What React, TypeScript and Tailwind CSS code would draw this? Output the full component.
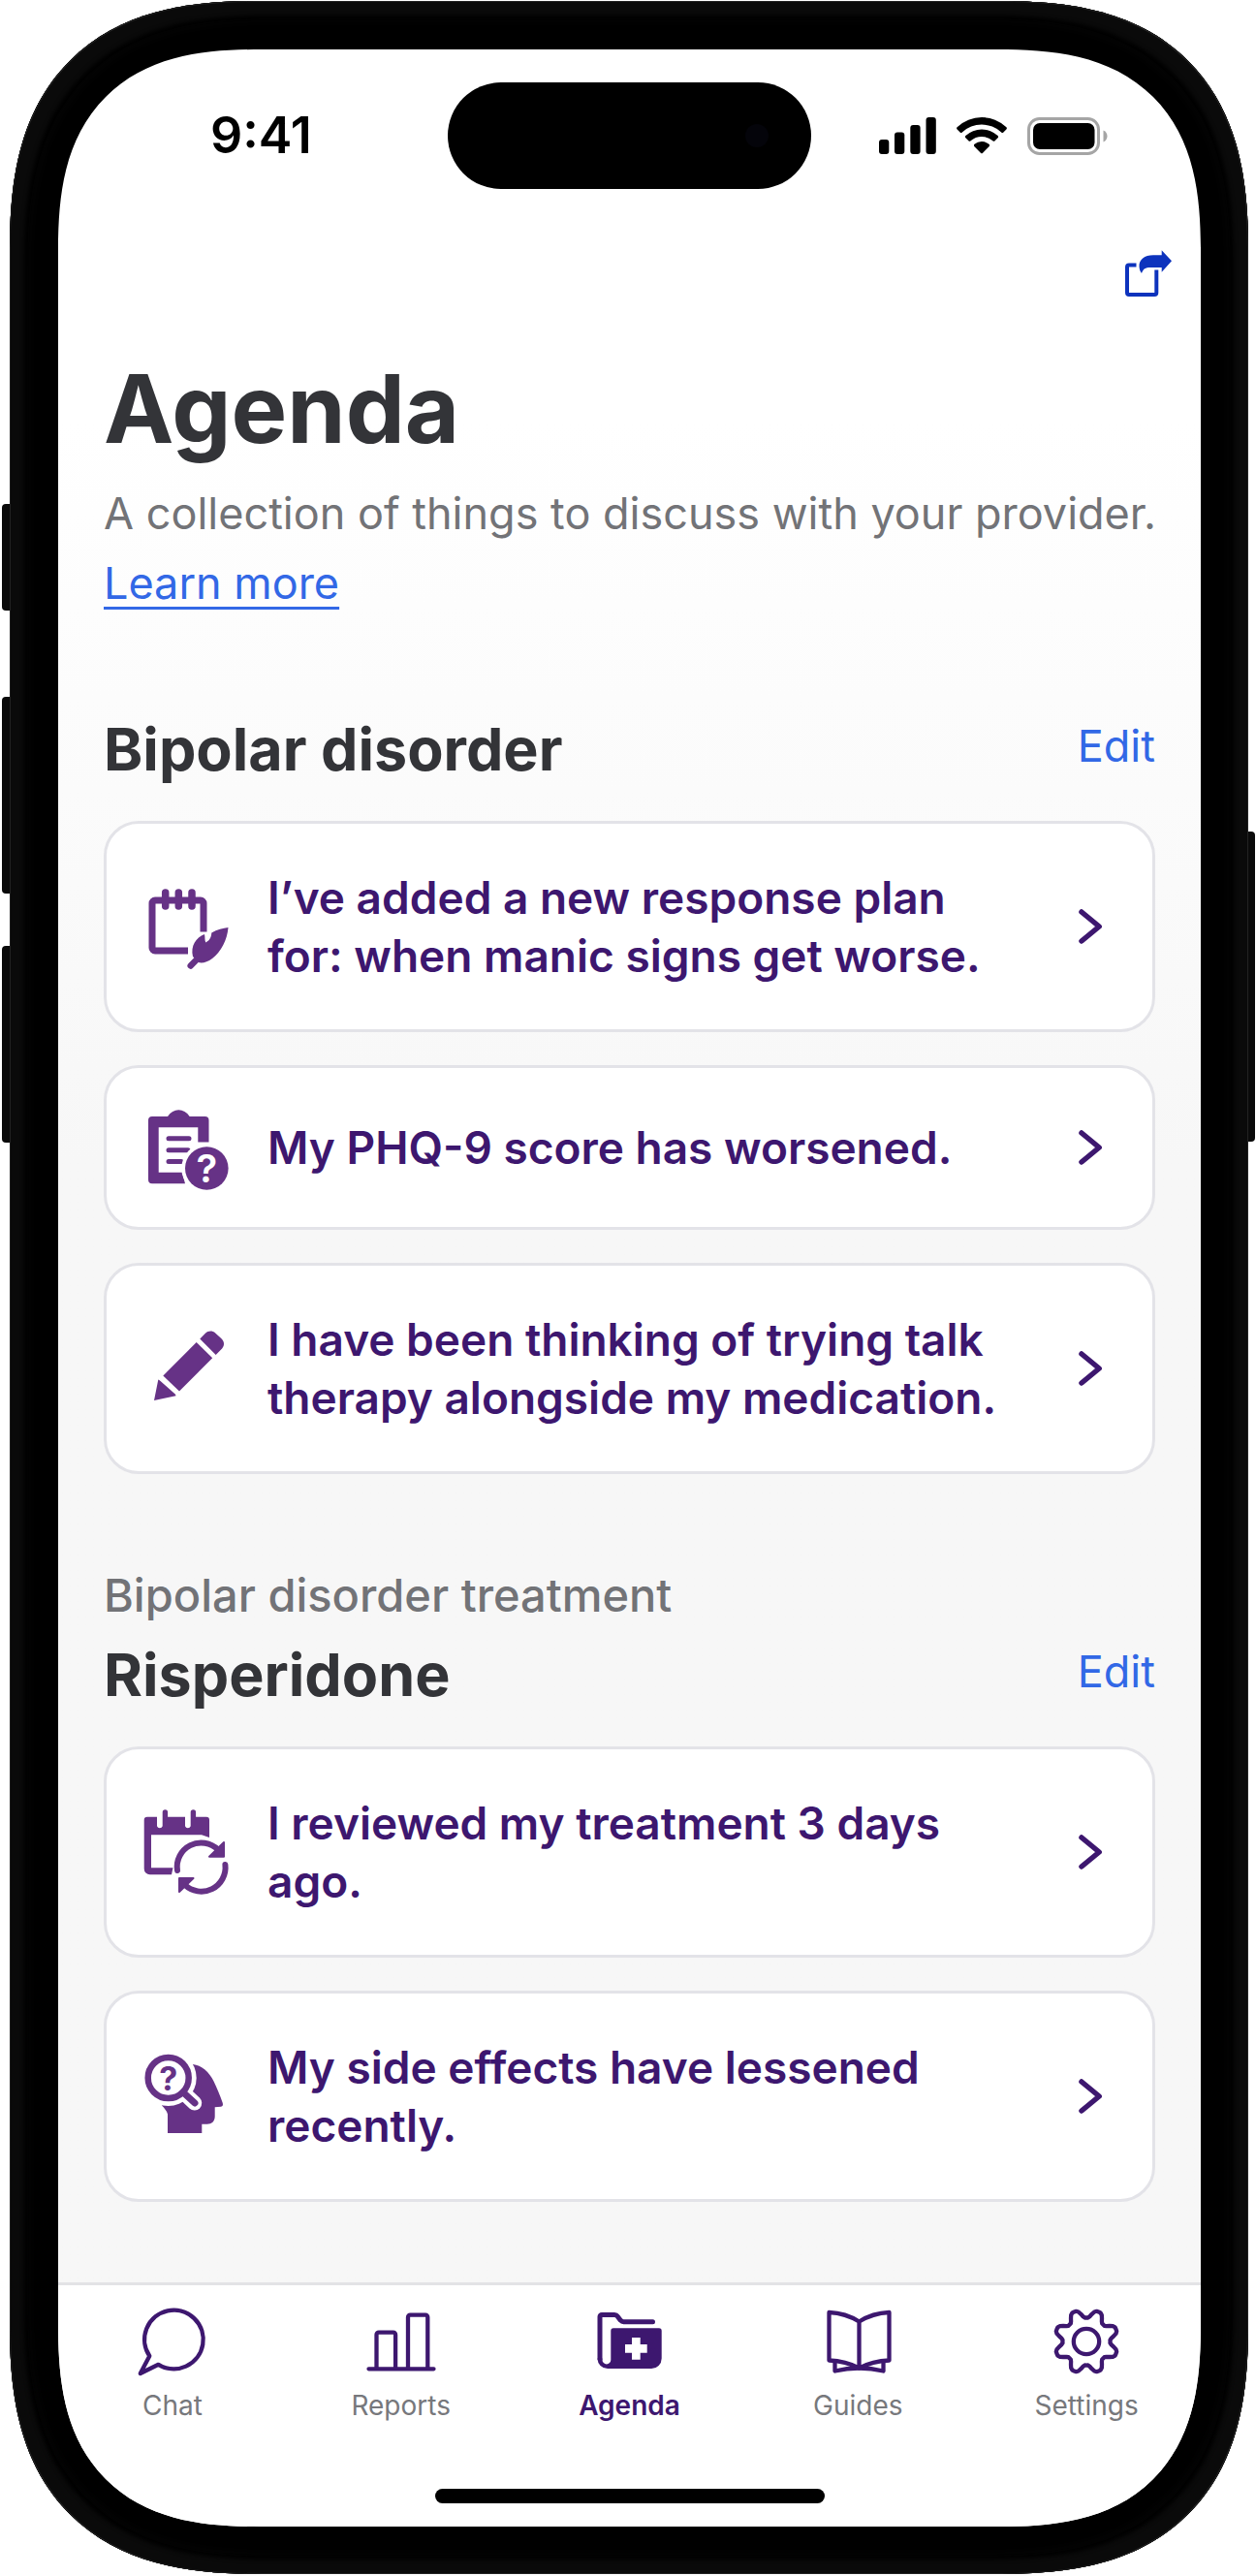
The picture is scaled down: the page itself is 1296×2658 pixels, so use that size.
import React, { useState } from 'react';

interface AgendaItem {
  text: string;
  icon: React.ReactNode;
}

interface AgendaSection {
  overline?: string;
  title: string;
  items: AgendaItem[];
}

// --- Card icons ---
const NoteIcon = () => (
  <svg viewBox="0 0 96 96" className="size-24 shrink-0" fill="none" aria-hidden="true">
    <g stroke="#663286">
      <path d="M50 73H16a3 3 0 0 1-3-3V24a3 3 0 0 1 3-3h47a3 3 0 0 1 3 3v29.500" strokeWidth="7" />
      <path d="M26.700 13v14M40.300 13v14M54 13v14" strokeWidth="7.500" strokeLinecap="round" />
      <path d="M52.700 88.500L62 79" strokeWidth="6.500" strokeLinecap="round" />
    </g>
    <path
      d="M55 79C52.500 68 58 59.500 67 56c.800 3 0 6 1.300 8.500 3-1.500 5.700-4.500 6-10C80 51 86 49.800 91.500 49c-1 13-7.500 25-16.500 32-4.500 3.600-9 4.800-13.500 4.300z"
      fill="#663286"
    />
  </svg>
);

const ClipboardIcon = () => (
  <svg viewBox="0 0 96 96" className="size-24 shrink-0" aria-hidden="true">
    <path
      fill="#663286"
      fillRule="evenodd"
      d="M13 16h16c3-4.500 7-6.800 11.300-6.800S48.700 11.500 51.700 16H67.500a4 4 0 0 1 4 4v22.500H60.300V27.200H19.700v46.600H44l3 11.400H13a4 4 0 0 1-4-4V20a4 4 0 0 1 4-4z"
    />
    <path d="M30 38.800h21M30 50.700h20M30 62.500h13" stroke="#663286" strokeWidth="5" strokeLinecap="round" />
    <circle cx="69.300" cy="69.500" r="26" fill="#fff" />
    <circle cx="69.300" cy="69.500" r="22.300" fill="#663286" />
    <text x="69.300" y="84" textAnchor="middle" fontSize="40" className="font-semibold" fill="#fff">?</text>
  </svg>
);

const PencilIcon = () => (
  <svg viewBox="0 0 96 96" className="size-24 shrink-0" fill="#663286" aria-hidden="true">
    <path d="M15 81l4.300-21.500c1 .500 1.700 1 2.500 1.800L36.200 74c.800.700 1.200 1.500 1.300 2.300z" />
    <path d="M24.300 55.400L58.700 21 75.200 37.200 41 71.400z" />
    <path d="M62.300 17.500l5.600-5.800c2.800-2.800 7.300-3 10.300-.200l6.300 5.800c3.200 3 3.400 7.300.600 10.300L78.700 34z" />
  </svg>
);

const ReviewIcon = () => (
  <svg viewBox="0 0 96 96" className="size-24 shrink-0" fill="none" aria-hidden="true">
    <path
      fill="#663286"
      fillRule="evenodd"
      d="M8 11.700h10v9.600a3 3 0 0 0 5.700 0V7a2.700 2.700 0 0 1 5.400 0v4.700H47v9.600a3 3 0 0 0 5.700 0V7a2.700 2.700 0 0 1 5.400 0v4.700H69a3 3 0 0 1 3 3V33l-8-2.700H12v34h22.500L33 71.300H10.700a6 6 0 0 1-6-6V15a3.300 3.300 0 0 1 3.300-3.300z"
    />
    <g stroke="#663286" strokeWidth="6" strokeLinecap="round">
      <path d="M39 67A24.800 24.800 0 0 1 81 45.700" />
      <path d="M88.400 61A24.800 24.800 0 0 1 46.500 81.700" />
    </g>
    <g fill="#663286" stroke="#663286" strokeWidth="2" strokeLinejoin="round">
      <path d="M87 38v14.700H72z" />
      <path d="M41 75h14.500L41 89z" />
    </g>
  </svg>
);

const MindIcon = () => (
  <svg viewBox="0 0 96 96" className="size-24 shrink-0" fill="none" aria-hidden="true">
    <path
      fill="#663286"
      d="M55 15c9 1 17 8 21.500 17.500C80 40 83 47 85.700 54.700c.700 2.300.200 3.600-1.700 4l-6.300.600v9.400c0 5-3.200 8-8 8h-5.400V86H29V66.500c-1-3.300-3-6-6-9L40 30z"
    />
    <path d="M44 43l12.700 12" stroke="#fff" strokeWidth="15" strokeLinecap="round" />
    <circle cx="29.700" cy="29" r="29" fill="#fff" />
    <path d="M45 44l12 11" stroke="#663286" strokeWidth="7" strokeLinecap="round" />
    <circle cx="29.700" cy="29" r="21" stroke="#663286" strokeWidth="6.500" />
    <text x="29.700" y="41.500" textAnchor="middle" fontSize="34" className="font-bold" fill="#663286">?</text>
  </svg>
);

const ShareIcon = () => (
  <svg viewBox="0 0 48 48" className="size-12" fill="none" aria-hidden="true">
    <path d="M11.500 15.500H4a2 2 0 0 0-2 2V44a2 2 0 0 0 2 2h26.300a2 2 0 0 0 2-2V20.500" stroke="#0d33bd" strokeWidth="4" />
    <path d="M48 11.300L37.700.300v5H29c-9 0-15 4.700-14.500 11.700.200 3 1 5 2.500 7 1.500-4.500 4-6 9-6h11.700v4.700z" fill="#0d33bd" />
  </svg>
);

const ChevronIcon = () => (
  <svg viewBox="0 0 48 48" className="size-12 shrink-0" fill="none" aria-hidden="true">
    <path d="M15 9l18.200 15L15 39" stroke="#3d176f" strokeWidth="5.500" strokeLinecap="round" strokeLinejoin="round" />
  </svg>
);

// --- Status bar icons ---
const SignalIcon = () => (
  <svg viewBox="0 0 59 38" className="h-[38px] w-[59px]" aria-hidden="true">
    <rect x="0" y="23" width="10.300" height="15" rx="3" />
    <rect x="16" y="15.500" width="10.300" height="22.500" rx="3" />
    <rect x="32.300" y="8" width="10.300" height="30" rx="3" />
    <rect x="48.500" y="0" width="10.300" height="38" rx="3" />
  </svg>
);

const WifiIcon = () => (
  <svg viewBox="0 0 52 38" className="h-[38px] w-[52px]" aria-hidden="true">
    <path d="M.600 10.200a36.800 36.800 0 0 1 50.800 0c.700.700.700 1.600 0 2.300l-3 3c-.700.700-1.500.700-2.200 0a29.500 29.500 0 0 0-40.400 0c-.700.700-1.500.700-2.200 0l-3-3c-.700-.700-.700-1.600 0-2.300z" />
    <path d="M9.400 19a24.300 24.300 0 0 1 33.200 0c.700.700.700 1.600 0 2.300l-3 3c-.700.700-1.500.700-2.200 0a17 17 0 0 0-22.800 0c-.700.700-1.500.700-2.200 0l-3-3c-.700-.700-.700-1.600 0-2.300z" />
    <path d="M18.500 27.800a11.700 11.700 0 0 1 15 0c.800.700.800 1.700 0 2.400l-6.400 6.500c-.700.700-1.500.700-2.200 0l-6.400-6.500c-.800-.700-.800-1.700 0-2.400z" />
  </svg>
);

const BatteryIcon = () => (
  <svg viewBox="0 0 83 39" className="h-[39px] w-[83px]" aria-hidden="true">
    <rect x="1.500" y="1.500" width="72" height="36" rx="11" fill="none" stroke="#a5a5a5" strokeWidth="3" />
    <rect x="6" y="6" width="63.500" height="27" rx="7" />
    <path d="M78.500 13.500c2.700 1.200 4 3.400 4 6s-1.300 4.800-4 6z" fill="#a5a5a5" />
  </svg>
);

// --- Tab bar icons ---
const ChatIcon = () => (
  <path d="M12.300 51A30.300 30.300 0 1 1 21.500 59.800L2.800 69z" />
);

const ReportsIcon = () => (
  <path d="M2.500 64.300h67M10.500 64V29a2.300 2.300 0 0 1 2.300-2.300h15a2.300 2.300 0 0 1 2.300 2.300v35M43 64V11a2.300 2.300 0 0 1 2.300-2.300H61a2.300 2.300 0 0 1 2.300 2.300v53" />
);

const FolderIcon = () => (
  <>
    <path d="M60.500 15.700H30.500c-1.500 0-2.300-.500-3.200-1.500l-3-4c-.800-1.200-1.800-1.800-3.300-1.800H8a2 2 0 0 0-2 2V54" strokeWidth="5" />
    <path
      d="M20 22.300h47a2.700 2.700 0 0 1 2.700 2.700v28.500A10.500 10.500 0 0 1 59.200 64H14A10.500 10.500 0 0 1 3.500 53.500h5V55a4.400 4.400 0 0 0 8.800 0V25a2.700 2.700 0 0 1 2.700-2.700z"
      fill="#3d176f"
      stroke="none"
    />
    <path d="M39 32h8.700v7h7v8.700h-7v7H39v-7h-7V39h7z" fill="#fff" stroke="none" />
  </>
);

const GuidesIcon = () => (
  <>
    <path d="M37.500 15.500C28 9.500 18 6.500 6.500 6v49.500c11.500.500 21.500 3 31 8 9.500-5 19.500-7.500 31-8V6C57 6.500 47 9.500 37.500 15.500zM37.500 15.500v48" />
    <path d="M12.500 57v9.500C21.500 64.300 29.500 63.500 37.500 63.500s16 .800 25 3V57" />
  </>
);

// Eight lobes, with a valley on every 45 degrees
const gearPath = Array.from({ length: 96 }, (_, i) => {
  const a = (i / 96) * Math.PI * 2;
  const wave = Math.max(-1, Math.min(1, 1.3 * Math.cos(8 * a)));
  const r = 28.8 - 4.2 * wave;
  return `${i === 0 ? 'M' : 'L'}${(36 + r * Math.cos(a)).toFixed(1)} ${(36 + r * Math.sin(a)).toFixed(1)}`;
}).join('') + 'z';

const SettingsIcon = () => (
  <>
    <path d={gearPath} />
    <circle cx="36" cy="36" r="13.200" />
  </>
);

const sections: AgendaSection[] = [
  {
    title: 'Bipolar disorder',
    items: [
      { text: 'I’ve added a new response plan for: when manic signs get worse.', icon: <NoteIcon /> },
      { text: 'My PHQ-9 score has worsened.', icon: <ClipboardIcon /> },
      { text: 'I have been thinking of trying talk therapy alongside my medication.', icon: <PencilIcon /> },
    ],
  },
  {
    overline: 'Bipolar disorder treatment',
    title: 'Risperidone',
    items: [
      { text: 'I reviewed my treatment 3 days ago.', icon: <ReviewIcon /> },
      { text: 'My side effects have lessened recently.', icon: <MindIcon /> },
    ],
  },
];

const tabs = [
  { label: 'Chat', icon: <ChatIcon /> },
  { label: 'Reports', icon: <ReportsIcon /> },
  { label: 'Agenda', icon: <FolderIcon /> },
  { label: 'Guides', icon: <GuidesIcon /> },
  { label: 'Settings', icon: <SettingsIcon /> },
];

const StatusBar = () => (
  <div className="grid grid-cols-[1fr_375px_1fr] items-center pt-[34px] pb-[33px]">
    <span className="pl-[157px] text-[52px] leading-[60px] font-semibold text-black">9:41</span>
    <div className="flex h-[110px] items-center justify-end rounded-full bg-black pr-11">
      <div className="size-6 rounded-full bg-[#04040a]" />
    </div>
    <div className="flex items-center justify-end gap-[21px] pr-24">
      <SignalIcon />
      <WifiIcon />
      <BatteryIcon />
    </div>
  </div>
);

const Card = ({ item }: { item: AgendaItem }) => (
  <li>
    <button
      type="button"
      className="flex min-h-[170px] w-full cursor-pointer items-center rounded-[36px] border-3 border-[#e3e3e8] bg-white py-[46px] pr-10 pl-[34px] text-left"
    >
      <span className="-my-5 shrink-0">{item.icon}</span>
      <span className="flex-1 pr-14 pl-9 text-[46px] leading-[60px] font-semibold text-[#3d176f]">{item.text}</span>
      <ChevronIcon />
    </button>
  </li>
);

const Section = ({ section }: { section: AgendaSection }) => (
  <section className="mt-[95px]">
    {section.overline && (
      <p className="mb-3 text-[47px] leading-[60px] font-medium text-[#727377]">{section.overline}</p>
    )}
    <div className="flex items-start justify-between">
      <h2 className="text-[61px] leading-[80px] font-bold text-[#333438]">{section.title}</h2>
      <button type="button" className="cursor-pointer text-[45px] leading-[74px] text-[#3268e6]">Edit</button>
    </div>
    <ul className="mt-[34px] flex flex-col gap-[34px]">
      {section.items.map((item) => <Card key={item.text} item={item} />)}
    </ul>
  </section>
);

const App: React.FC = () => {
  const [activeTab, setActiveTab] = useState<string>('Agenda');

  return (
    <div className="relative bg-white pt-px pr-2 pb-0.5 pl-2.5 font-['Inter','Liberation_Sans',sans-serif]">
      {/* Side buttons */}
      <div className="absolute top-[520px] left-0.5 h-[110px] w-3 rounded-l-sm bg-[#0a0a0a]" />
      <div className="absolute top-[719px] left-0.5 h-[203px] w-3 rounded-l-sm bg-[#0a0a0a]" />
      <div className="absolute top-[976px] left-0.5 h-[203px] w-3 rounded-l-sm bg-[#0a0a0a]" />
      <div className="absolute top-[858px] right-px h-[320px] w-3 rounded-r-sm bg-[#0a0a0a]" />

      {/* Phone body */}
      <div className="relative rounded-[214px] bg-black pt-[50px] pr-[49px] pb-[49px] pl-[50px] shadow-[inset_0_0_0_1px_#222,inset_0_0_4px_15px_#0a0a0a,inset_0_0_0_18px_#000,inset_0_0_8px_22px_#040404] [corner-shape:superellipse(1.35)] supports-[corner-shape:squircle]:rounded-[260px]">
        <div className="flex flex-col overflow-hidden rounded-[172px] bg-linear-to-b from-white from-15% to-[#f7f7f7] to-45% [corner-shape:superellipse(1.38)] supports-[corner-shape:squircle]:rounded-[210px]">
          <StatusBar />

          <div className="flex justify-end py-[30px] pr-[30px]">
            <button type="button" aria-label="Share" className="cursor-pointer"><ShareIcon /></button>
          </div>

          <main className="px-[47px] pt-5 pb-[83px]">
            <h1 className="text-[97px] leading-[132px] font-bold text-[#333438]">Agenda</h1>
            <div className="mt-1.5 text-[45px] leading-[72px] text-[#727377]">
              <p className="whitespace-nowrap">A collection of things to discuss with your provider.</p>
              <a href="#learn-more" className="block w-fit text-[#3268e6] underline decoration-3 underline-offset-8">Learn more</a>
            </div>
            {sections.map((section) => <Section key={section.title} section={section} />)}
          </main>

          {/* Tab bar */}
          <nav className="border-t-3 border-[#e3e3e6] bg-white pt-[22px] pb-6">
            <div className="grid grid-cols-5">
              {tabs.map((tab) => (
                <button
                  key={tab.label}
                  type="button"
                  onClick={() => setActiveTab(tab.label)}
                  className="flex cursor-pointer flex-col items-center gap-3"
                >
                  <svg viewBox="0 0 72 72" className="size-[72px]" fill="none" stroke="#3d176f" strokeWidth="4.300" strokeLinecap="round" strokeLinejoin="round" aria-hidden="true">
                    {tab.icon}
                  </svg>
                  <span className={`text-[28px] leading-9 ${tab.label === activeTab ? 'font-semibold text-[#3d176f]' : 'text-[#77787c]'}`}>
                    {tab.label}
                  </span>
                </button>
              ))}
            </div>
            <div className="mx-auto mt-[68px] h-[15px] w-[402px] rounded-full bg-black" />
          </nav>
        </div>
      </div>
    </div>
  );
};

export default App;
